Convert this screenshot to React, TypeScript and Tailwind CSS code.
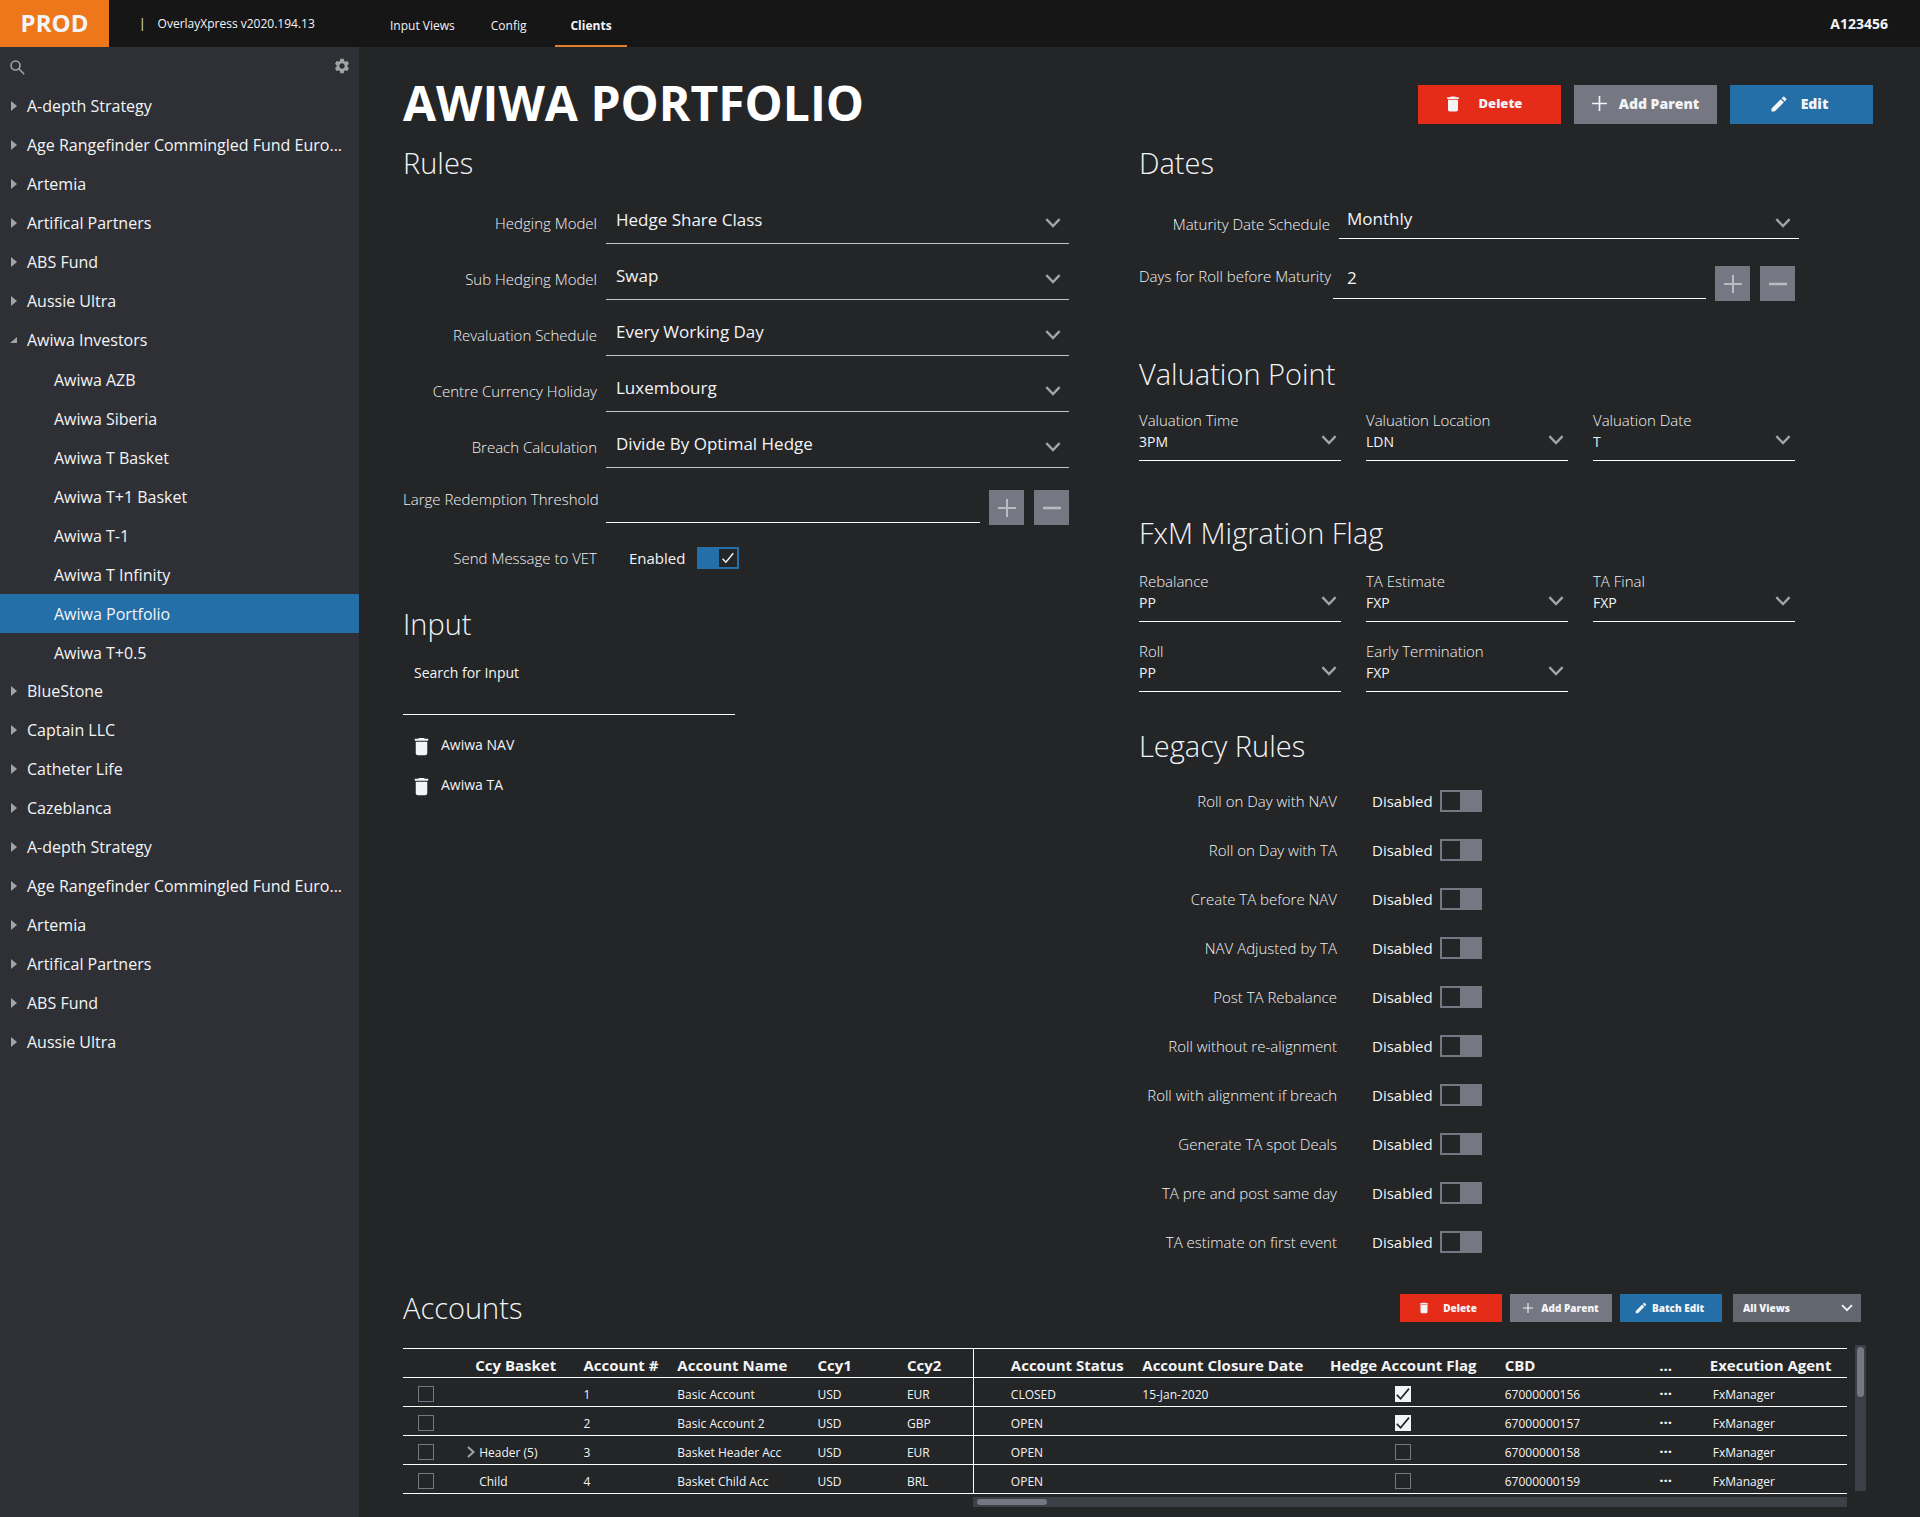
import type { ReactNode } from "react";
import { MdDelete, MdEdit, MdSettings } from "react-icons/md";

type TreeItem = { name: string; open?: boolean; children?: string[] };

const clients: TreeItem[] = [
  { name: "A-depth Strategy" },
  { name: "Age Rangefinder Commingled Fund Euro..." },
  { name: "Artemia" },
  { name: "Artifical Partners" },
  { name: "ABS Fund" },
  { name: "Aussie Ultra" },
  {
    name: "Awiwa Investors",
    open: true,
    children: [
      "Awiwa AZB",
      "Awiwa Siberia",
      "Awiwa T Basket",
      "Awiwa T+1 Basket",
      "Awiwa T-1",
      "Awiwa T Infinity",
      "Awiwa Portfolio",
      "Awiwa T+0.5",
    ],
  },
  { name: "BlueStone" },
  { name: "Captain LLC" },
  { name: "Catheter Life" },
  { name: "Cazeblanca" },
  { name: "A-depth Strategy" },
  { name: "Age Rangefinder Commingled Fund Euro..." },
  { name: "Artemia" },
  { name: "Artifical Partners" },
  { name: "ABS Fund" },
  { name: "Aussie Ultra" },
];

const rules = [
  { label: "Hedging Model", value: "Hedge Share Class" },
  { label: "Sub Hedging Model", value: "Swap" },
  { label: "Revaluation Schedule", value: "Every Working Day" },
  { label: "Centre Currency Holiday", value: "Luxembourg" },
  { label: "Breach Calculation", value: "Divide By Optimal Hedge" },
];

const valuation = [
  { label: "Valuation Time", value: "3PM" },
  { label: "Valuation Location", value: "LDN" },
  { label: "Valuation Date", value: "T" },
];

const migration = [
  { label: "Rebalance", value: "PP" },
  { label: "TA Estimate", value: "FXP" },
  { label: "TA Final", value: "FXP" },
  { label: "Roll", value: "PP" },
  { label: "Early Termination", value: "FXP" },
];

const legacy = [
  "Roll on Day with NAV",
  "Roll on Day with TA",
  "Create TA before NAV",
  "NAV Adjusted by TA",
  "Post TA Rebalance",
  "Roll without re-alignment",
  "Roll with alignment if breach",
  "Generate TA spot Deals",
  "TA pre and post same day",
  "TA estimate on first event",
];

const accounts = [
  { basket: "", header: false, num: "1", name: "Basic Account", ccy1: "USD", ccy2: "EUR", status: "CLOSED", closed: "15-Jan-2020", flag: true, cbd: "67000000156" },
  { basket: "", header: false, num: "2", name: "Basic Account 2", ccy1: "USD", ccy2: "GBP", status: "OPEN", closed: "", flag: true, cbd: "67000000157" },
  { basket: "Header (5)", header: true, num: "3", name: "Basket Header Acc", ccy1: "USD", ccy2: "EUR", status: "OPEN", closed: "", flag: false, cbd: "67000000158" },
  { basket: "Child", header: false, num: "4", name: "Basket Child Acc", ccy1: "USD", ccy2: "BRL", status: "OPEN", closed: "", flag: false, cbd: "67000000159" },
];

function Chevron({ className }: { className: string }) {
  return (
    <svg viewBox="0 0 16 10" className={className} fill="none" stroke="currentColor" strokeWidth="2.4" aria-hidden="true">
      <path d="M1.4 1.2 8 8l6.6-6.8" />
    </svg>
  );
}

function Check({ className }: { className: string }) {
  return (
    <svg viewBox="0 0 16 16" className={className} fill="none" stroke="currentColor" strokeWidth="1.7" aria-hidden="true">
      <path d="M1.8 8.8 5.6 12.8 14 2.6" />
    </svg>
  );
}

function Plus({ className }: { className: string }) {
  return (
    <svg viewBox="0 0 18 18" className={className} stroke="currentColor" strokeWidth="2" aria-hidden="true">
      <path d="M9 0v18M0 9h18" />
    </svg>
  );
}

function Heading({ children }: { children: ReactNode }) {
  return <h2 className="text-[29px] leading-8 font-light">{children}</h2>;
}

function LineSelect({ id, value, className, chevron }: { id: string; value: string; className: string; chevron: string }) {
  return (
    <div className="relative min-w-0 flex-1">
      <select id={id} defaultValue={value} className={`block w-full appearance-none border-b bg-transparent pb-0.5 text-[17px] outline-none ${className}`}>
        <option>{value}</option>
      </select>
      <Chevron className={`pointer-events-none absolute right-2 h-2.5 w-4 text-[#a3a4a6] ${chevron}`} />
    </div>
  );
}

function SmallField({ label, value, id }: { label: string; value: string; id: string }) {
  return (
    <div>
      <label htmlFor={id} className="block text-[15px] leading-5 font-light">{label}</label>
      <div className="relative">
        <select id={id} defaultValue={value} className="block h-[31px] w-full appearance-none border-b border-white bg-transparent pb-1.5 text-sm font-medium outline-none">
          <option>{value}</option>
        </select>
        <Chevron className="pointer-events-none absolute right-1 bottom-4 h-2.5 w-4 text-[#a3a4a6]" />
      </div>
    </div>
  );
}

function Stepper() {
  return (
    <div className="flex gap-2.5">
      <button type="button" aria-label="Increase" className="grid size-[35px] place-items-center bg-[#757882] text-[#b9bbc0]">
        <Plus className="size-[18px]" />
      </button>
      <button type="button" aria-label="Decrease" className="grid size-[35px] place-items-center bg-[#757882] text-[#b9bbc0]">
        <svg viewBox="0 0 18 18" className="size-[18px]" stroke="currentColor" strokeWidth="2.5" aria-hidden="true">
          <path d="M0 9h18" />
        </svg>
      </button>
    </div>
  );
}

function Toggle({ id, on }: { id: string; on?: boolean }) {
  return (
    <span className="relative block h-[22px] w-[42px]">
      <input
        id={id}
        type="checkbox"
        role="switch"
        defaultChecked={on}
        className="block h-full w-full appearance-none bg-[#757882] checked:bg-[#256fa8]"
      />
      <span className={`pointer-events-none absolute inset-y-0.5 grid w-[18px] place-items-center bg-[#232527] ${on ? "right-0.5" : "left-0.5"}`}>
        {on && <Check className="size-3.5" />}
      </span>
    </span>
  );
}

function Box({ label, checked }: { label: string; checked?: boolean }) {
  return (
    <span className="relative block size-4">
      <input
        type="checkbox"
        aria-label={label}
        defaultChecked={checked}
        className="block size-4 appearance-none border border-[#757882] checked:border-[#f3f4f6] checked:bg-[#f3f4f6]"
      />
      {checked && <Check className="pointer-events-none absolute inset-0 size-4 text-[#232527]" />}
    </span>
  );
}

export default function App() {
  return (
    <div className="flex min-h-screen flex-col bg-[#232527] font-['Open_Sans',sans-serif] text-[#f3f4f6]">
      <header className="flex h-[47px] items-stretch bg-[#161616] text-xs">
        <div className="grid w-[109px] place-items-center bg-[#ee771b] pb-0.5 text-2xl font-bold">PROD</div>
        <div className="flex w-[266px] items-center gap-3 pl-[30px]">
          <span>|</span>
          <span>OverlayXpress v2020.194.13</span>
        </div>
        <nav className="flex items-stretch gap-1.5">
          <a href="#views" className="flex items-center px-[15px] pt-1">Input Views</a>
          <a href="#config" className="flex items-center px-[15px] pt-1">Config</a>
          <a href="#clients" aria-current="page" className="ml-2 flex items-center border-b-2 border-[#e0802f] px-[15px] pt-1.5 font-bold">Clients</a>
        </nav>
        <div className="ml-auto flex items-center pr-8 text-sm font-bold">A123456</div>
      </header>

      <div className="flex flex-1">
        <aside className="w-[359px] shrink-0 bg-[#2f3035]">
          <div className="flex h-10 items-center justify-between pr-2 pl-2.5 text-[#a3a4a6]">
            <button type="button" aria-label="Search clients">
              <svg viewBox="0 0 15 15" className="size-[15px]" fill="none" stroke="currentColor" strokeWidth="1.6" aria-hidden="true">
                <circle cx="5.5" cy="5.5" r="4.5" />
                <path d="m8.8 8.8 5.4 5.4" />
              </svg>
            </button>
            <button type="button" aria-label="Settings" className="pb-0.5">
              <MdSettings className="size-[18px]" />
            </button>
          </div>
          <ul className="text-base">
            {clients.map((c, i) => (
              <li key={i}>
                <button type="button" aria-expanded={!!c.open} className="flex h-[39px] w-full items-center gap-2.5 pb-0.5 pl-2.5 text-left whitespace-nowrap">
                  <svg viewBox="0 0 7 10" className="h-2.5 w-[7px] shrink-0 fill-[#a3a4a6]" aria-hidden="true">
                    <path d={c.open ? "M7 2v6H0z" : "M1 0l6 5-6 5z"} />
                  </svg>
                  <span>{c.name}</span>
                </button>
                {c.children && (
                  <ul>
                    {c.children.map((child) => (
                      <li key={child}>
                        <a
                          href="#client"
                          className={`flex h-[39px] items-center pl-[54px] ${child === "Awiwa Portfolio" ? "bg-[#256fa8]" : ""}`}
                        >
                          {child}
                        </a>
                      </li>
                    ))}
                  </ul>
                )}
              </li>
            ))}
          </ul>
        </aside>

        <main className="min-w-0 flex-1 pt-[38px] pr-[47px] pl-11">
          <div className="flex h-[39px] items-center justify-between">
            <h1 className="pb-1 text-5xl leading-9 font-bold text-white">AWIWA PORTFOLIO</h1>
            <div className="flex gap-[13px] text-sm font-extrabold">
              <button type="button" className="flex h-[39px] w-[143px] items-center justify-center gap-4 bg-[#e52c18] pr-3.5 pb-0.5 text-[13px]">
                <MdDelete className="size-5" />
                Delete
              </button>
              <button type="button" className="flex h-[39px] w-[143px] items-center justify-center gap-3 bg-[#757882] pb-0.5">
                <Plus className="size-[15px]" />
                Add Parent
              </button>
              <button type="button" className="flex h-[39px] w-[143px] items-center justify-center gap-3 bg-[#256fa8] pr-1.5 pb-0.5">
                <MdEdit className="size-5" />
                Edit
              </button>
            </div>
          </div>

          <div className="mt-[23px] grid grid-cols-2">
            <div className="pr-[69px]">
              <section>
                <Heading>Rules</Heading>
                <div className="mt-[9px]">
                  {rules.map((r, i) => (
                    <div key={r.label} className="flex h-14 items-end gap-[9px]">
                      <label htmlFor={`rule-${i}`} className="mb-[11px] w-[194px] text-right text-[15px] leading-5 font-light">{r.label}</label>
                      <LineSelect id={`rule-${i}`} value={r.value} className="h-[46px] border-[#c4c5c6] pl-2.5" chevron="bottom-4" />
                    </div>
                  ))}
                  <div className="flex h-[57px] items-end gap-[9px]">
                    <label htmlFor="threshold" className="mb-4 w-[194px] text-right text-[15px] leading-5 font-light whitespace-nowrap">Large Redemption Threshold</label>
                    <input id="threshold" type="text" className="mb-0.5 h-9 min-w-0 flex-1 border-b border-white bg-transparent px-2.5 text-[17px] outline-none" />
                    <Stepper />
                  </div>
                  <div className="mt-[22px] flex items-center">
                    <label htmlFor="vet" className="w-[194px] text-right text-[15px] leading-5 font-light">Send Message to VET</label>
                    <span className="ml-8 w-[68px] text-[15px] leading-5">Enabled</span>
                    <Toggle id="vet" on />
                  </div>
                </div>
              </section>
              <section className="mt-[39px]">
                <Heading>Input</Heading>
                <div className="mt-[23px] w-[332px]">
                  <label htmlFor="input-search" className="block px-[11px] text-sm">Search for Input</label>
                  <input id="input-search" type="text" className="block h-8 w-full border-b border-white bg-transparent px-[11px] text-sm outline-none" />
                </div>
                <ul className="mt-2.5 text-sm">
                  {["Awiwa NAV", "Awiwa TA"].map((n) => (
                    <li key={n} className="flex h-10 items-center gap-2 pl-[7px]">
                      <button type="button" aria-label={`Remove ${n}`} className="pt-0.5">
                        <MdDelete className="size-[23px]" />
                      </button>
                      {n}
                    </li>
                  ))}
                </ul>
              </section>
            </div>

            <div className="pr-[74px] pl-px">
              <section>
                <Heading>Dates</Heading>
                <div className="mt-1">
                  <div className="flex h-14 items-end gap-[9px]">
                    <label htmlFor="maturity" className="mb-[5px] w-[191px] text-right text-[15px] leading-5 font-light">Maturity Date Schedule</label>
                    <LineSelect id="maturity" value="Monthly" className="h-[38px] border-white pl-2" chevron="bottom-[11px]" />
                  </div>
                  <div className="flex h-[62px] items-end pr-1">
                    <label htmlFor="days" className="mb-[15px] w-[191px] text-right text-[15px] leading-5 font-light whitespace-nowrap">Days for Roll before Maturity</label>
                    <input id="days" type="text" defaultValue="2" className="mr-[9px] mb-0.5 ml-[3px] h-[42px] min-w-0 flex-1 border-b border-white bg-transparent pl-3.5 text-[17px] outline-none" />
                    <Stepper />
                  </div>
                </div>
              </section>
              <section className="mt-[57px]">
                <Heading>Valuation Point</Heading>
                <div className="mt-5 grid grid-cols-3 gap-x-[25px] pr-1">
                  {valuation.map((f, i) => (
                    <SmallField key={f.label} id={`valuation-${i}`} {...f} />
                  ))}
                </div>
              </section>
              <section className="mt-14">
                <Heading>FxM Migration Flag</Heading>
                <div className="mt-[22px] grid grid-cols-3 gap-x-[25px] gap-y-[19px] pr-1">
                  {migration.map((f, i) => (
                    <SmallField key={f.label} id={`migration-${i}`} {...f} />
                  ))}
                </div>
              </section>
              <section className="mt-[38px]">
                <Heading>Legacy Rules</Heading>
                <div className="mt-3.5">
                  {legacy.map((l, i) => (
                    <div key={l} className="flex h-[49px] items-center">
                      <label htmlFor={`legacy-${i}`} className="w-[198px] text-right text-[15px] leading-5 font-light">{l}</label>
                      <span className="ml-[35px] w-[68px] text-[15px] leading-5 font-medium">Disabled</span>
                      <Toggle id={`legacy-${i}`} />
                    </div>
                  ))}
                </div>
              </section>
            </div>
          </div>

          <section className="mt-[26px] pr-[7px]">
            <div className="flex h-8 items-center justify-between pr-[5px]">
              <Heading>Accounts</Heading>
              <div className="flex gap-2 text-[10px] font-extrabold">
                <button type="button" className="flex h-7 w-[102px] items-center justify-center gap-3 bg-[#e52c18] pr-2">
                  <MdDelete className="size-3.5" />
                  Delete
                </button>
                <button type="button" className="flex h-7 w-[102px] items-center justify-center gap-2 bg-[#757882]">
                  <Plus className="size-2.5" />
                  Add Parent
                </button>
                <button type="button" className="flex h-7 w-[102px] items-center justify-center gap-1 bg-[#256fa8] pr-1">
                  <MdEdit className="size-3.5" />
                  Batch Edit
                </button>
                <div className="relative ml-[3px]">
                  <select aria-label="View" className="block h-7 w-32 appearance-none bg-[#62666e] pl-2.5 font-extrabold outline-none">
                    <option>All Views</option>
                  </select>
                  <Chevron className="pointer-events-none absolute top-2.5 right-2 h-2 w-3" />
                </div>
              </div>
            </div>

            <div className="mt-[21px] flex items-start gap-2">
              <div className="mt-[3px] min-w-0 flex-1">
                <table className="w-full table-fixed border-collapse text-left whitespace-nowrap">
                  <colgroup>
                    <col className="w-[5%]" />
                    <col className="w-[7.5%]" />
                    <col className="w-[6.5%]" />
                    <col className="w-[9.7%]" />
                    <col className="w-[6.2%]" />
                    <col className="w-[4.6%]" />
                    <col className="w-[11.7%]" />
                    <col className="w-[13%]" />
                    <col className="w-[12.1%]" />
                    <col className="w-[10.7%]" />
                    <col className="w-[3.5%]" />
                    <col />
                  </colgroup>
                  <thead className="text-[15px] leading-5">
                    <tr className="h-[29px] border-y border-white">
                      <th aria-label="Select" />
                      <th className="pt-1">Ccy Basket</th>
                      <th className="pt-1">Account #</th>
                      <th className="pt-1">Account Name</th>
                      <th className="pt-1">Ccy1</th>
                      <th className="border-r border-white pt-1">Ccy2</th>
                      <th className="pt-1 pl-[37px]">Account Status</th>
                      <th className="pt-1">Account Closure Date</th>
                      <th className="pt-1">Hedge Account Flag</th>
                      <th className="pt-1">CBD</th>
                      <th className="pt-1">...</th>
                      <th className="pt-1">Execution Agent</th>
                    </tr>
                  </thead>
                  <tbody className="text-xs">
                    {accounts.map((a) => (
                      <tr key={a.num} className="h-[29px] border-b border-white">
                        <td className="pt-1 pl-[15px]">
                          <Box label={`Select account ${a.num}`} />
                        </td>
                        <td className="pt-1.5">
                          <span className="relative pl-1">
                            {a.header && (
                              <svg viewBox="0 0 8 12" className="absolute top-0.5 -left-2 h-3 w-2 text-[#a3a4a6]" fill="none" stroke="currentColor" strokeWidth="2" aria-hidden="true">
                                <path d="m1 1 5.5 5L1 11" />
                              </svg>
                            )}
                            {a.basket}
                          </span>
                        </td>
                        <td className="pt-1.5">{a.num}</td>
                        <td className="pt-1.5">{a.name}</td>
                        <td className="pt-1.5">{a.ccy1}</td>
                        <td className="border-r border-white pt-1.5">{a.ccy2}</td>
                        <td className="pt-1.5 pl-[37px]">{a.status}</td>
                        <td className="pt-1.5">{a.closed}</td>
                        <td className="pt-1 pl-[65px]">
                          <Box label={`Hedge account flag ${a.num}`} checked={a.flag} />
                        </td>
                        <td className="pt-1.5">{a.cbd}</td>
                        <td className="pb-1.5 text-[15px] leading-4 font-bold">...</td>
                        <td className="pt-1.5 pl-[3px]">FxManager</td>
                      </tr>
                    ))}
                  </tbody>
                </table>
                <div className="mt-[3px] ml-[39.5%] h-2.5 bg-[#3b3f46] px-1 py-0.5">
                  <div className="h-1.5 w-[70px] rounded-full bg-[#757882]" />
                </div>
              </div>
              <div className="h-[146px] w-[11px] bg-[#3b3f46] px-0.5 py-0.5">
                <div className="h-[50px] w-[7px] rounded-full bg-[#757882]" />
              </div>
            </div>
          </section>
        </main>
      </div>
    </div>
  );
}
